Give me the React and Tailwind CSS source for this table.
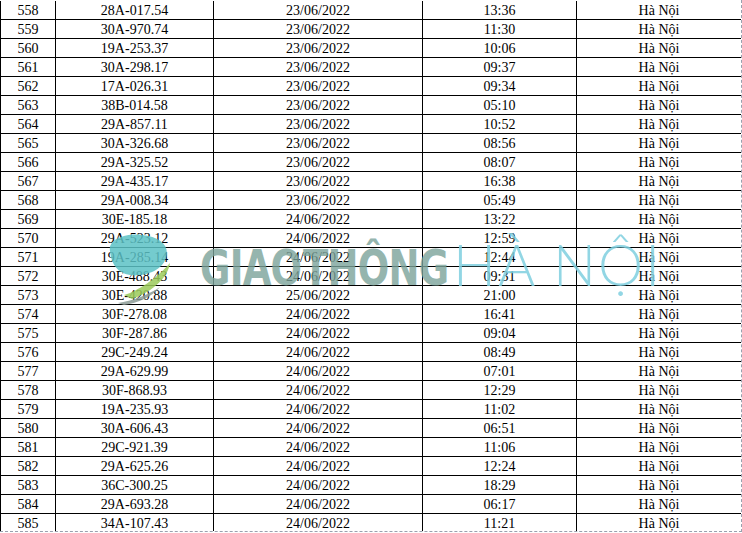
const rows = [
  ['558', '28A-017.54', '23/06/2022', '13:36'],
  ['559', '30A-970.74', '23/06/2022', '11:30'],
  ['560', '19A-253.37', '23/06/2022', '10:06'],
  ['561', '30A-298.17', '23/06/2022', '09:37'],
  ['562', '17A-026.31', '23/06/2022', '09:34'],
  ['563', '38B-014.58', '23/06/2022', '05:10'],
  ['564', '29A-857.11', '23/06/2022', '10:52'],
  ['565', '30A-326.68', '23/06/2022', '08:56'],
  ['566', '29A-325.52', '23/06/2022', '08:07'],
  ['567', '29A-435.17', '23/06/2022', '16:38'],
  ['568', '29A-008.34', '23/06/2022', '05:49'],
  ['569', '30E-185.18', '24/06/2022', '13:22'],
  ['570', '29A-523.12', '24/06/2022', '12:59'],
  ['571', '19A-285.14', '24/06/2022', '12:44'],
  ['572', '30E-488.43', '24/06/2022', '09:31'],
  ['573', '30E-420.88', '25/06/2022', '21:00'],
  ['574', '30F-278.08', '24/06/2022', '16:41'],
  ['575', '30F-287.86', '24/06/2022', '09:04'],
  ['576', '29C-249.24', '24/06/2022', '08:49'],
  ['577', '29A-629.99', '24/06/2022', '07:01'],
  ['578', '30F-868.93', '24/06/2022', '12:29'],
  ['579', '19A-235.93', '24/06/2022', '11:02'],
  ['580', '30A-606.43', '24/06/2022', '06:51'],
  ['581', '29C-921.39', '24/06/2022', '11:06'],
  ['582', '29A-625.26', '24/06/2022', '12:24'],
  ['583', '36C-300.25', '24/06/2022', '18:29'],
  ['584', '29A-693.28', '24/06/2022', '06:17'],
  ['585', '34A-107.43', '24/06/2022', '11:21'],
]

function Cell({ children }) {
  return (
    <div className="border-r border-black text-center leading-[18px] pt-[1px] whitespace-nowrap">
      {children}
    </div>
  )
}

function Logo() {
  return (
    <svg width="90" height="75" viewBox="0 0 90 75">
      {/* teal blob */}
      <path d="M6 20 C4 8 22 2 38 4 C56 6 66 14 62 27 C58 40 40 46 26 44 C12 42 7 31 6 20 Z" fill="#5cc2c6" />
      {/* green swoosh */}
      <path d="M20 64 C34 60 52 48 66 32 C64 46 50 60 28 68 Z" fill="#9ccb5a" />
      {/* gray swoosh */}
      <path d="M14 72 C28 70 44 64 56 56 C48 66 34 72 20 74 Z" fill="#8c9c96" />
    </svg>
  )
}

export default function App() {
  return (
    <div className="relative w-[742px] h-[532px] overflow-hidden bg-white border-r border-b border-dashed border-gray-400 pt-[1px]">
      <div className="text-[14px] text-black" style={{ fontFamily: '"Liberation Serif", "Times New Roman", serif' }}>
        {rows.map((r) => (
          <div key={r[0]} className="grid grid-cols-[55px_158px_209px_154px_165px] h-[19px] border-l border-b border-black">
            <Cell>{r[0]}</Cell>
            <Cell>{r[1]}</Cell>
            <Cell>{r[2]}</Cell>
            <Cell>{r[3]}</Cell>
            <Cell>Hà Nội</Cell>
          </div>
        ))}
      </div>

      {/* watermark */}
      <div className="absolute left-[104px] top-[231px] opacity-85 pointer-events-none">
        <Logo />
      </div>
      <div
        className="absolute left-[200px] top-[243px] text-[50px] font-bold leading-none text-[#7ba39a] opacity-80 origin-left scale-x-[0.74] tracking-[-1px] [word-spacing:-14px] whitespace-nowrap pointer-events-none"
        style={{ fontFamily: '"DejaVu Sans", sans-serif' }}
      >
        GIAO THÔNG
      </div>
      <div
        className="absolute left-[453px] top-[236px] text-[57px] font-light leading-none text-[#7fd0e0] opacity-85 tracking-[2px] whitespace-nowrap pointer-events-none"
        style={{ fontFamily: 'Lato, "Open Sans", sans-serif' }}
      >
        HÀ NỘI
      </div>
    </div>
  )
}
